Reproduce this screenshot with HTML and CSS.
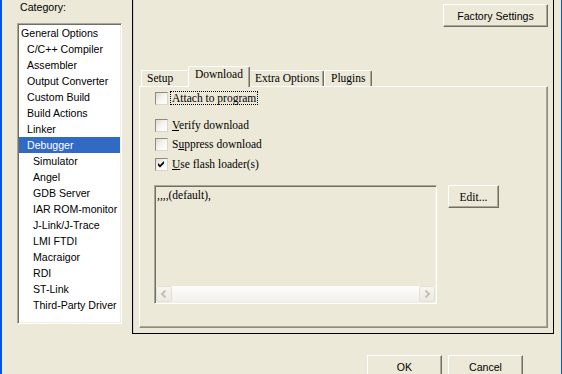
FILE: index.html
```html
<!DOCTYPE html>
<html>
<head>
<meta charset="utf-8">
<link rel="stylesheet" href="styles.css">
</head>
<body>
<div class="window">
  <div class="main">
    <div class="left">
      <div class="cat-label">Category:</div>
      <div class="listbox">
        <div class="item l0">General Options</div>
        <div class="item l1">C/C++ Compiler</div>
        <div class="item l1">Assembler</div>
        <div class="item l1">Output Converter</div>
        <div class="item l1">Custom Build</div>
        <div class="item l1">Build Actions</div>
        <div class="item l1">Linker</div>
        <div class="item l1 sel">Debugger</div>
        <div class="item l2">Simulator</div>
        <div class="item l2">Angel</div>
        <div class="item l2">GDB Server</div>
        <div class="item l2">IAR ROM-monitor</div>
        <div class="item l2">J-Link/J-Trace</div>
        <div class="item l2">LMI FTDI</div>
        <div class="item l2">Macraigor</div>
        <div class="item l2">RDI</div>
        <div class="item l2">ST-Link</div>
        <div class="item l2">Third-Party Driver</div>
      </div>
    </div>
    <div class="frame">
      <div class="top-row"><button class="btn factory">Factory Settings</button></div>
      <div class="tabctl">
        <div class="tabs">
          <div class="tab t-setup">Setup</div>
          <div class="tab sel t-download">Download</div>
          <div class="tab t-extra">Extra Options</div>
          <div class="tab t-plugins">Plugins</div>
        </div>
        <div class="panel">
          <div class="check c-attach"><span class="box"></span><span class="lbl focus">Attach to program</span></div>
          <div class="check c-verify"><span class="box"></span><span class="lbl"><u>V</u>erify download</span></div>
          <div class="check c-suppress"><span class="box"></span><span class="lbl">S<u>u</u>ppress download</span></div>
          <div class="check c-use"><span class="box"><svg class="tick" width="11" height="11" viewBox="0 0 11 11"><polygon points="2,4 4,6 8,2 8,4.5 4,8.5 2,6.5" fill="#000"/></svg></span><span class="lbl"><u>U</u>se flash loader(s)</span></div>
          <div class="loader-row">
            <div class="loader-list">
              <div class="loader-text">,,,,(default),</div>
              <div class="hscroll">
                <div class="sbtn"><svg width="14" height="14" viewBox="0 0 14 14"><polyline points="8.5,3.5 5,7 8.5,10.5" fill="none" stroke="#c3c1b4" stroke-width="2"/></svg></div>
                <div class="track"></div>
                <div class="sbtn"><svg width="14" height="14" viewBox="0 0 14 14"><polyline points="5.5,3.5 9,7 5.5,10.5" fill="none" stroke="#c3c1b4" stroke-width="2"/></svg></div>
              </div>
            </div>
            <button class="btn edit">Edit...</button>
          </div>
        </div>
      </div>
    </div>
  </div>
  <div class="bottom">
    <button class="btn ok">OK</button>
    <button class="btn cancel">Cancel</button>
  </div>
</div>
</body>
</html>
```

FILE: styles.css
```css
html, body {
  margin: 0;
  padding: 0;
  background: #ece9d8;
}

.window {
  width: 562px;
  height: 374px;
  box-sizing: border-box;
  border-left: 2px solid #0553e3;
  border-right: 1px solid #0553e3;
  background: #ece9d8;
  display: flex;
  flex-direction: column;
  overflow: hidden;
  font-family: "Liberation Sans", Arial, sans-serif;
  font-size: 10.6px;
  color: #000;
}

.main {
  display: flex;
  height: 334px;
  flex-shrink: 0;
}

.left {
  width: 130px;
  flex-shrink: 0;
  padding-top: 1px;
}

.cat-label {
  padding-left: 18px;
  line-height: 13px;
}

.listbox {
  margin: 9px 0 0 15px;
  width: 105px;
  height: 301px;
  box-sizing: border-box;
  border: 1px solid;
  border-color: #aca899 #ffffff #ffffff #aca899;
  box-shadow: inset 1px 1px #716f64, inset -1px -1px #f1efe2;
  background: #ffffff;
  padding: 1px;
}

.item {
  height: 16px;
  line-height: 16px;
  white-space: nowrap;
}
.item.l0 { padding-left: 2px; }
.item.l1 { padding-left: 8px; }
.item.l2 { padding-left: 14px; }
.item.sel {
  background: #316ac5;
  color: #ffffff;
}

.frame {
  width: 422px;
  height: 334px;
  flex-shrink: 0;
  box-sizing: border-box;
  border: 1px solid #000;
  border-top: 0;
  padding: 4px 5px 5px 6px;
  display: flex;
  flex-direction: column;
  box-shadow: inset 1px 0 #d6d3c6;
}

.top-row {
  display: flex;
  justify-content: flex-end;
  height: 23px;
}

.btn {
  box-sizing: border-box;
  height: 23px;
  margin: 0;
  padding: 0;
  border: 1px solid;
  border-color: #ffffff #716f64 #716f64 #ffffff;
  box-shadow: inset -1px -1px #aca899;
  background: #ece9d8;
  font-family: "Liberation Sans", Arial, sans-serif;
  font-size: 10.6px;
  color: #000;
}
.factory { width: 105px; }
.ok, .cancel { width: 75px; }
.edit {
  width: 51px;
  font-family: "Liberation Serif", "Times New Roman", serif;
  font-size: 11.5px;
}

.tabctl {
  margin-top: 39px;
  flex: 1;
  display: flex;
  flex-direction: column;
}

.tabs {
  display: flex;
  align-items: flex-end;
  height: 20px;
  padding-left: 2px;
  flex-shrink: 0;
}

.tab {
  box-sizing: border-box;
  height: 16px;
  border: 1px solid;
  border-color: #ffffff #716f64 transparent #ffffff;
  border-bottom: 0;
  border-radius: 2px 2px 0 0;
  box-shadow: inset -1px 0 #aca899;
  padding-left: 5px;
  font-family: "Liberation Serif", "Times New Roman", serif;
  font-size: 11.5px;
  line-height: 14px;
  white-space: nowrap;
  background: #ece9d8;
}
.tab.sel {
  height: 21px;
  margin: 0 -2px -1px;
  position: relative;
  z-index: 1;
  padding-left: 6px;
  line-height: 15px;
}
.t-setup { width: 49px; }
.t-download { width: 62px; }
.t-extra { width: 76px; padding-left: 6px; }
.t-plugins { width: 48px; padding-left: 6px; }

.panel {
  flex: 1;
  box-sizing: border-box;
  border: 1px solid;
  border-color: #ffffff #8f8d80 #8f8d80 #ffffff;
  box-shadow: inset -1px -1px #aca899;
  padding: 4px 0 0 14px;
  font-family: "Liberation Serif", "Times New Roman", serif;
  font-size: 11.5px;
}

.check {
  display: flex;
  align-items: center;
  height: 14px;
  margin-left: 1px;
  gap: 3px;
}
.c-verify { margin-top: 13px; }
.c-suppress { margin-top: 5px; }
.c-use { margin-top: 6px; }

.box {
  width: 13px;
  height: 13px;
  box-sizing: border-box;
  border: 1px solid;
  border-color: #8e8c80 #d8d6cb #d8d6cb #8e8c80;
  background: linear-gradient(135deg, #dcdad0 0%, #f4f3ee 45%, #ffffff 100%);
  display: flex;
}
.tick { display: block; }

.lbl {
  line-height: 12px;
  padding: 0 1px;
  white-space: nowrap;
}
.lbl.focus {
  outline: 1px dotted #000;
  outline-offset: 0;
}

.loader-row {
  margin-top: 14px;
  display: flex;
  gap: 11px;
  align-items: flex-start;
}

.loader-list {
  width: 283px;
  height: 119px;
  box-sizing: border-box;
  border: 1px solid;
  border-color: #aca899 #ffffff #ffffff #aca899;
  box-shadow: inset 1px 1px #716f64, inset -1px -1px #f1efe2;
  padding: 1px;
  background: #ece9d8;
  display: flex;
  flex-direction: column;
}

.loader-text {
  flex: 1;
  padding: 2px 0 0 1px;
  line-height: 12px;
}

.hscroll {
  height: 16px;
  display: flex;
  background: linear-gradient(#fdfdfc, #f1f0eb);
}
.track { flex: 1; }
.sbtn {
  width: 16px;
  height: 16px;
  box-sizing: border-box;
  border: 1px solid #e3e1d6;
  border-radius: 2px;
  background: linear-gradient(#f6f5f1, #ebe9e0);
  display: flex;
  align-items: center;
  justify-content: center;
}
.sbtn svg { display: block; }

.bottom {
  display: flex;
  justify-content: flex-end;
  gap: 6px;
  padding-right: 38px;
  margin-top: 21px;
}
```
